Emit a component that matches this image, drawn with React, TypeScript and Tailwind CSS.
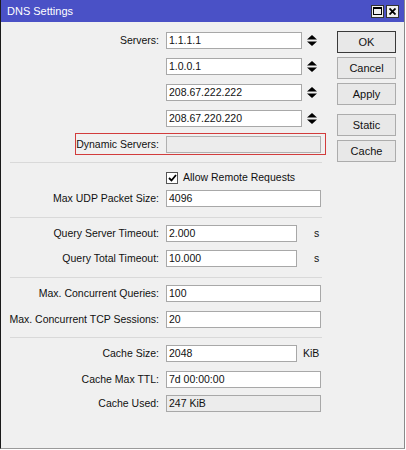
import React from "react";

const font = { fontFamily: '"Liberation Sans", Arial, sans-serif' };

function Spin() {
  return (
    <svg width="10" height="11" viewBox="0 0 10 11" className="ml-[5px]">
      <polygon points="5,0 10,4.5 0,4.5" fill="#000" />
      <polygon points="0,6.5 10,6.5 5,11" fill="#000" />
    </svg>
  );
}

function Field({ value, w, gray }: { value: string; w: string; gray?: boolean }) {
  return (
    <div
      className={`h-[17px] ${w} border border-[#a8a8a8] ${gray ? "bg-[#ececec]" : "bg-white"} flex items-center pl-[2px] text-[10.5px] text-[#111] leading-none`}
    >
      {value}
    </div>
  );
}

function Row({
  label,
  children,
  className,
}: {
  label?: string;
  children: React.ReactNode;
  className?: string;
}) {
  return (
    <div className={`flex items-center h-[17px] ${className ?? ""}`}>
      <div className="w-[159px] shrink-0 text-right text-[10.5px] text-[#111] leading-none pr-[1px]">{label}</div>
      <div className="ml-[6px] flex items-center">{children}</div>
    </div>
  );
}

function Sep({ className }: { className?: string }) {
  return <div className={`ml-[9px] w-[312px] h-px bg-[#d9d9d9] ${className ?? ""}`} />;
}

function Btn({ label, def, className }: { label: string; def?: boolean; className?: string }) {
  return (
    <div
      className={`w-[59px] h-[22px] flex items-center justify-center bg-[#e8e8e8] border ${def ? "border-[#3a3a3a]" : "border-[#acacac]"} text-[11px] text-[#111] leading-none ${className ?? ""}`}
    >
      {label}
    </div>
  );
}

export default function App() {
  return (
    <div className="w-[406px] h-[450px] bg-white" style={font}>
      <div className="w-[405px] h-[449px] bg-[#f0f0f0] border-l border-l-[#1a1a1a] border-r border-r-[#8a8a8a] border-b border-b-[#9a9a9a] flex flex-col">
        <div className="h-[22px] bg-[#4a51c6] flex items-center pl-[6px] pr-[5px] shrink-0">
          <span className="text-white text-[11px] leading-none flex-1">DNS Settings</span>
          <div className="w-[13px] h-[13px] bg-[#f0f0f0] border border-[#333] flex items-center justify-center">
            <div className="w-[9px] h-[8px] border border-black border-t-2" />
          </div>
          <div className="ml-[2px] w-[13px] h-[13px] bg-[#f0f0f0] border border-[#333] flex items-center justify-center">
            <svg width="7" height="7" viewBox="0 0 7 7">
              <path d="M0.5 0.5 L6.5 6.5 M6.5 0.5 L0.5 6.5" stroke="#000" strokeWidth="1.8" />
            </svg>
          </div>
        </div>
        <div className="flex flex-1">
          <div className="w-[331px] flex flex-col pt-[10px]">
            <Row label="Servers:">
              <Field value="1.1.1.1" w="w-[136px]" />
              <Spin />
            </Row>
            <Row className="mt-[9px]">
              <Field value="1.0.0.1" w="w-[136px]" />
              <Spin />
            </Row>
            <Row className="mt-[9px]">
              <Field value="208.67.222.222" w="w-[136px]" />
              <Spin />
            </Row>
            <Row className="mt-[9px]">
              <Field value="208.67.220.220" w="w-[136px]" />
              <Spin />
            </Row>
            <div className="mt-[6px] ml-[74px] w-[251px] h-[22px] border border-[#d23c3c] flex items-center">
              <div className="w-[84px] text-right text-[10.5px] text-[#111] leading-none pr-[1px]">Dynamic Servers:</div>
              <div className="ml-[6px] h-[17px] w-[155px] border border-[#b0b0b0] bg-[#ececec]" />
            </div>
            <Sep className="mt-[7px]" />
            <Row className="mt-[6px]">
              <div className="w-[12px] h-[12px] bg-white border border-[#555] flex items-center justify-center">
                <svg width="9" height="8" viewBox="0 0 9 8">
                  <path d="M1 4 L3.5 6.5 L8 1" stroke="#000" strokeWidth="1.8" fill="none" />
                </svg>
              </div>
              <span className="ml-[5px] text-[10.5px] text-[#111] leading-none">Allow Remote Requests</span>
            </Row>
            <Row label="Max UDP Packet Size:" className="mt-[4px]">
              <Field value="4096" w="w-[155px]" />
            </Row>
            <Sep className="mt-[10px]" />
            <Row label="Query Server Timeout:" className="mt-[7px]">
              <Field value="2.000" w="w-[131px]" />
              <span className="ml-[17px] text-[10.5px] text-[#111] leading-none">s</span>
            </Row>
            <Row label="Query Total Timeout:" className="mt-[8px]">
              <Field value="10.000" w="w-[131px]" />
              <span className="ml-[17px] text-[10.5px] text-[#111] leading-none">s</span>
            </Row>
            <Sep className="mt-[10px]" />
            <Row label="Max. Concurrent Queries:" className="mt-[7px]">
              <Field value="100" w="w-[155px]" />
            </Row>
            <Row label="Max. Concurrent TCP Sessions:" className="mt-[9px]">
              <Field value="20" w="w-[155px]" />
            </Row>
            <Sep className="mt-[9px]" />
            <Row label="Cache Size:" className="mt-[7px]">
              <Field value="2048" w="w-[131px]" />
              <span className="ml-[6px] text-[10.5px] text-[#111] leading-none">KiB</span>
            </Row>
            <Row label="Cache Max TTL:" className="mt-[9px]">
              <Field value="7d 00:00:00" w="w-[155px]" />
            </Row>
            <Row label="Cache Used:" className="mt-[7px]">
              <Field value="247 KiB" w="w-[155px]" gray />
            </Row>
          </div>
          <div className="flex flex-col pt-[9px] ml-[5px]">
            <Btn label="OK" def />
            <Btn label="Cancel" className="mt-[4px]" />
            <Btn label="Apply" className="mt-[4px]" />
            <Btn label="Static" className="mt-[9px]" />
            <Btn label="Cache" className="mt-[4px]" />
          </div>
        </div>
      </div>
    </div>
  );
}
